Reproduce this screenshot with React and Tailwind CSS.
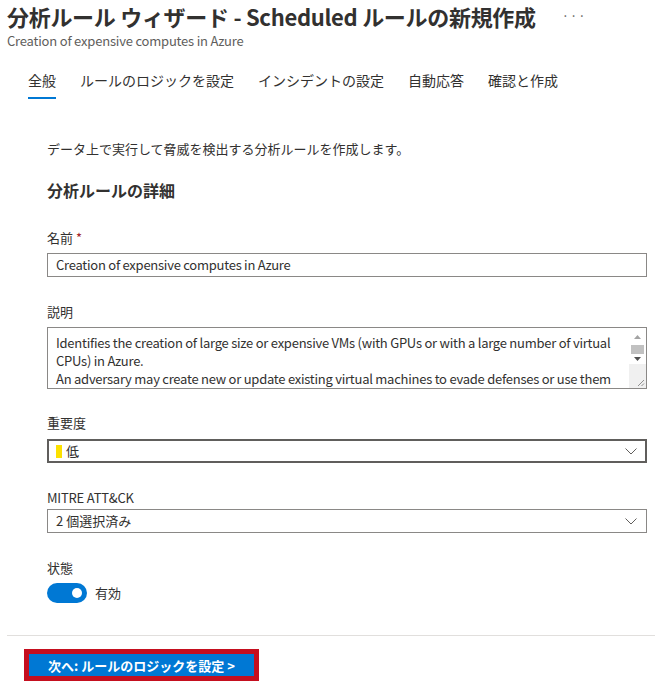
const TABS = ['全般', 'ルールのロジックを設定', 'インシデントの設定', '自動応答', '確認と作成']

const DESC_LINES = [
  'Identifies the creation of large size or expensive VMs (with GPUs or with a large number of virtual',
  'CPUs) in Azure.',
  'An adversary may create new or update existing virtual machines to evade defenses or use them',
]

function Label({ children, className = '' }) {
  return <div className={`text-[13px] leading-[20px] text-[#323130] ${className}`}>{children}</div>
}

function Chevron() {
  return (
    <svg width="12" height="7" viewBox="0 0 12 7" className="shrink-0">
      <path d="M0.5 0.5 L6 6 L11.5 0.5" fill="none" stroke="#605e5c" strokeWidth="1" />
    </svg>
  )
}

function Scrollbar() {
  return (
    <div className="w-[17px] shrink-0 flex flex-col bg-white">
      <div className="h-[17px] flex items-center justify-center">
        <svg width="7" height="4" viewBox="0 0 7 4"><path d="M0 4 L3.5 0 L7 4 Z" fill="#a3a3a3" /></svg>
      </div>
      <div className="mx-[2px] h-[9px] bg-[#c1c1c1]" />
      <div className="h-[10px] flex items-center justify-center">
        <svg width="7" height="4" viewBox="0 0 7 4"><path d="M0 0 L3.5 4 L7 0 Z" fill="#505050" /></svg>
      </div>
      <div className="flex-1 bg-[#f0f0f0] relative">
        <svg width="8" height="8" viewBox="0 0 8 8" className="absolute right-[1px] bottom-[1px]">
          <path d="M7 1 L1 7 M7 4.5 L4.5 7" stroke="#909090" strokeWidth="1" />
        </svg>
      </div>
    </div>
  )
}

export default function App() {
  return (
    <div
      className="w-[655px] h-[685px] bg-white overflow-hidden text-[#323130]"
      style={{ fontFamily: '"Noto Sans CJK JP", "Noto Sans", sans-serif' }}
    >
      {/* Header */}
      <div className="pl-[7px]">
        <div className="mt-[1px] flex items-center">
          <h1 className="text-[22px] leading-[30px] font-semibold tracking-[-0.3px]">
            分析ルール ウィザード - Scheduled ルールの新規作成
          </h1>
          <span className="ml-[26px] text-[13px] leading-[30px] text-[#605e5c] tracking-[1px]">···</span>
        </div>
        <div className="mt-[1px] text-[13px] leading-[18px] text-[#605e5c] tracking-[-0.2px]">
          Creation of expensive computes in Azure
        </div>
      </div>

      {/* Tabs */}
      <div className="mt-[14px] pl-[28px] flex gap-[24px]">
        {TABS.map((t, i) => (
          <div
            key={t}
            className={[
              'pt-[6px] pb-[7px] text-[14px] leading-[20px] border-b-2 text-[#323130]',
              i === 0 ? 'border-[#0078d4]' : 'border-transparent',
            ].join(' ')}
          >
            {t}
          </div>
        ))}
      </div>

      {/* Form */}
      <div className="pl-[47px] pr-[8px]">
        <div className="mt-[40px] text-[13px] leading-[20px]">
          データ上で実行して脅威を検出する分析ルールを作成します。
        </div>
        <div className="mt-[20px] text-[16px] leading-[22px] font-bold">分析ルールの詳細</div>

        <Label className="mt-[27px]">
          名前 <span className="text-[#a4262c]">*</span>
        </Label>
        <div className="mt-[5px] h-[24px] border border-[#8a8886] flex items-center px-[8px] text-[13px] tracking-[-0.25px]">
          Creation of expensive computes in Azure
        </div>

        <Label className="mt-[25px]">説明</Label>
        <div className="mt-[5px] h-[62px] border border-[#8a8886] flex overflow-hidden">
          <div className="flex-1 pl-[8px] pt-[6px] text-[13px] leading-[18px] tracking-[-0.25px] overflow-hidden">
            {DESC_LINES.map((l) => (
              <div key={l} className="whitespace-nowrap">{l}</div>
            ))}
          </div>
          <Scrollbar />
        </div>

        <Label className="mt-[24px]">重要度</Label>
        <div className="mt-[6px] h-[24px] border-2 border-[#605e5c] flex items-center pl-[7px] pr-[8px] text-[13px]">
          <span className="w-[6px] h-[13px] bg-[#fce100] mr-[4px] shrink-0" />
          <span className="flex-1">低</span>
          <Chevron />
        </div>

        <Label className="mt-[25px] tracking-[-0.2px]">MITRE ATT&amp;CK</Label>
        <div className="mt-[1px] h-[24px] border border-[#8a8886] flex items-center pl-[8px] pr-[9px] text-[13px]">
          <span className="flex-1">2 個選択済み</span>
          <Chevron />
        </div>

        <Label className="mt-[25px]">状態</Label>
        <div className="mt-[5px] flex items-center gap-[8px]">
          <div className="w-[40px] h-[20px] rounded-full bg-[#0078d4] flex items-center justify-end pr-[5px]">
            <div className="w-[10px] h-[10px] rounded-full bg-white" />
          </div>
          <span className="text-[13px] leading-[20px]">有効</span>
        </div>
      </div>

      {/* Footer */}
      <div className="mt-[32px] ml-[7px] border-t border-[#e1dfdd]" />
      <div className="mt-[13px] ml-[24px]">
        <button className="border-[5px] border-[#c50f1f] bg-[#0078d4] w-[235px] h-[32px] flex items-center justify-center text-white text-[13px] font-semibold leading-none">
          次へ: ルールのロジックを設定 &gt;
        </button>
      </div>
    </div>
  )
}
